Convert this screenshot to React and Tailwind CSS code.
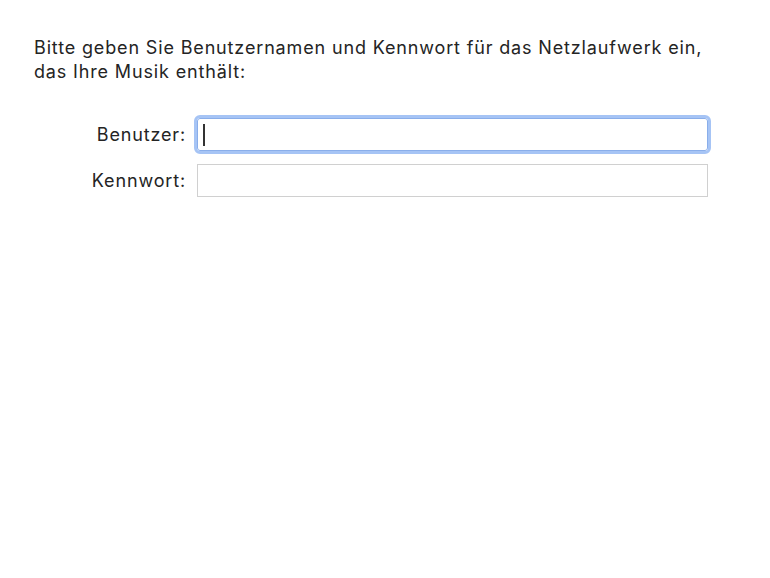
import React from 'react';

const App = () => {
  return (
    <div className="w-[770px] h-[578px] bg-white text-[#242424] font-['Inter','Liberation_Sans',sans-serif] text-[18px] tracking-[0.85px]">
      <div className="pt-[36px] pl-[34px]">
        <p className="leading-[24px] whitespace-nowrap">
          Bitte geben Sie Benutzernamen und Kennwort für das Netzlaufwerk ein,
          <br />
          das Ihre Musik enthält:
        </p>

        <div className="mt-[34px] flex flex-col gap-[13px]">
          <div className="flex items-center gap-[11px]">
            <label className="w-[152px] text-right leading-[24px]">Benutzer:</label>
            <div className="relative w-[511px] h-[33px] border border-[#8aaeea] outline-[3px] outline-[#a6c4f5] rounded-[3px] bg-white">
              <span className="absolute left-[5px] top-[5px] w-[2px] h-[22px] bg-[#333333]" />
            </div>
          </div>
          <div className="flex items-center gap-[11px]">
            <label className="w-[152px] text-right leading-[24px]">Kennwort:</label>
            <div className="w-[511px] h-[33px] border border-[#d0d0d0] bg-white" />
          </div>
        </div>
      </div>
    </div>
  );
};

export default App;
